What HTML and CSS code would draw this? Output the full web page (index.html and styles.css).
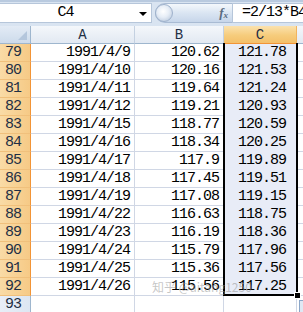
FILE: index.html
```html
<!DOCTYPE html>
<html>
<head>
<meta charset="utf-8">
<link rel="stylesheet" href="styles.css">
</head>
<body>
<div class="fbar">
  <div class="namebox"><span class="ref">C4</span><span class="arrow"></span></div>
  <div class="capsule"><span class="knob"></span><span class="fx">f<sub>x</sub></span></div>
  <div class="formula">=2/13*B4</div>
</div>
<div class="sheet">
  <div class="grid">
    <div class="corner"></div>
    <div class="colh">A</div>
    <div class="colh">B</div>
    <div class="colh sel">C</div>
    <div class="colh last"></div>

    <div class="rowh">79</div><div class="cell">1991/4/9</div><div class="cell">120.62</div><div class="cell c">121.78</div><div class="cell d"></div>
    <div class="rowh">80</div><div class="cell">1991/4/10</div><div class="cell">120.16</div><div class="cell c">121.53</div><div class="cell d"></div>
    <div class="rowh">81</div><div class="cell">1991/4/11</div><div class="cell">119.64</div><div class="cell c">121.24</div><div class="cell d"></div>
    <div class="rowh">82</div><div class="cell">1991/4/12</div><div class="cell">119.21</div><div class="cell c">120.93</div><div class="cell d"></div>
    <div class="rowh">83</div><div class="cell">1991/4/15</div><div class="cell">118.77</div><div class="cell c">120.59</div><div class="cell d"></div>
    <div class="rowh">84</div><div class="cell">1991/4/16</div><div class="cell">118.34</div><div class="cell c">120.25</div><div class="cell d"></div>
    <div class="rowh">85</div><div class="cell">1991/4/17</div><div class="cell">117.9</div><div class="cell c">119.89</div><div class="cell d"></div>
    <div class="rowh">86</div><div class="cell">1991/4/18</div><div class="cell">117.45</div><div class="cell c">119.51</div><div class="cell d"></div>
    <div class="rowh">87</div><div class="cell">1991/4/19</div><div class="cell">117.08</div><div class="cell c">119.15</div><div class="cell d"></div>
    <div class="rowh">88</div><div class="cell">1991/4/22</div><div class="cell">116.63</div><div class="cell c">118.75</div><div class="cell d"></div>
    <div class="rowh">89</div><div class="cell">1991/4/23</div><div class="cell">116.19</div><div class="cell c">118.36</div><div class="cell d"></div>
    <div class="rowh">90</div><div class="cell">1991/4/24</div><div class="cell">115.79</div><div class="cell c">117.96</div><div class="cell d"></div>
    <div class="rowh">91</div><div class="cell">1991/4/25</div><div class="cell">115.36</div><div class="cell c">117.56</div><div class="cell d"></div>
    <div class="rowh">92</div><div class="cell">1991/4/26</div><div class="cell">115.56</div><div class="cell c">117.25</div><div class="cell d"></div>
    <div class="rowh off">93</div><div class="cell"></div><div class="cell"></div><div class="cell"></div><div class="cell d"></div>
  </div>
  <div class="selection"><span class="handle"></span></div>
  <div class="paste"></div>
  <div class="watermark">知乎 @aitang1250</div>
</div>
</body>
</html>
```

FILE: styles.css
```css
* { box-sizing: border-box; }
html, body { margin: 0; padding: 0; }
body {
  width: 303px;
  height: 312px;
  overflow: hidden;
  background: #ffffff;
  font-family: "Liberation Mono", "DejaVu Sans Mono", monospace;
  font-size: 15px;
  color: #000;
}
.fbar {
  height: 26px;
  display: flex;
  align-items: flex-start;
  background: #d9e4f1;
  border-top: 2px solid #b9cadf;
  padding-top: 1px;
}
.namebox {
  width: 152px;
  height: 20px;
  background: #fff;
  border: 1px solid #b6c6da;
  border-left: none;
  position: relative;
  display: flex;
  align-items: center;
  justify-content: center;
  padding-right: 20px;
  letter-spacing: -1px;
}
.ref { line-height: 18px; }
.arrow {
  position: absolute;
  right: 4px;
  top: 8px;
  width: 0;
  height: 0;
  border-left: 4px solid transparent;
  border-right: 4px solid transparent;
  border-top: 4px solid #000;
}
.capsule {
  margin-left: 3px;
  width: 77px;
  height: 20px;
  border-radius: 10px 0 0 10px;
  background: linear-gradient(#f4f8fc, #dae5f2 50%, #c7d6ea);
  border: 1px solid #a9bbd3;
  border-right: none;
  display: flex;
  align-items: center;
  justify-content: space-between;
  padding-right: 4px;
}
.knob {
  width: 18px;
  height: 18px;
  border-radius: 50%;
  background: radial-gradient(circle at 45% 40%, #ffffff 0, #e6edf6 45%, #aebfd6 100%);
  border: 1px solid #9fb2cc;
  margin-left: -1px;
}
.fx {
  font-family: "Liberation Serif", serif;
  font-style: italic;
  font-weight: bold;
  font-size: 13px;
  color: #5a6b80;
  line-height: 1;
}
.fx sub { font-size: 9px; vertical-align: -1px; }
.formula {
  flex: 1;
  height: 20px;
  background: #fff;
  border: 1px solid #b6c6da;
  border-right: none;
  padding-left: 9px;
  line-height: 18px;
  white-space: nowrap;
  overflow: hidden;
  letter-spacing: -1px;
}
.sheet {
  position: relative;
}
.grid {
  display: grid;
  grid-template-columns: 31px 104px 89px 73px 1fr;
  grid-auto-rows: 18px;
}
.grid > div {
  border-right: 1px solid #d0d7e5;
  border-bottom: 1px solid #d0d7e5;
  line-height: 18px;
  white-space: nowrap;
  letter-spacing: -1px;
}
.grid > .corner {
  background: linear-gradient(#e3ebf5, #cddbeb);
  border-right: 1px solid #9eb6ce;
  border-bottom: 1px solid #9eb6ce;
  position: relative;
}
.corner::after {
  content: "";
  position: absolute;
  right: 3px;
  bottom: 3px;
  width: 0;
  height: 0;
  border-left: 9px solid transparent;
  border-bottom: 9px solid #b4c6dc;
}
.grid > .colh {
  background: linear-gradient(#f4f7fb, #e2e9f2);
  border-right: 1px solid #c4d1e1;
  border-bottom: 1px solid #9eb6ce;
  text-align: center;
  color: #1f2f45;
  font-size: 14px;
  letter-spacing: 0;
}
.grid > .colh.sel {
  background: linear-gradient(#fbe2ae, #f6cc7c 55%, #f4c06a);
  border-bottom: 1px solid #f29436;
  border-right: 1px solid #f2b45e;
}
.grid > .colh.last { border-right: none; }
.grid > .rowh {
  background: linear-gradient(to right, #f9dba6, #f6ca86);
  border-right: 1px solid #f29436;
  border-bottom: 1px solid #f0c07c;
  padding-left: 5px;
  color: #1f2f45;
}
.grid > .rowh.off {
  background: linear-gradient(to right, #e8eef7, #dde6f2);
  border-right: 1px solid #9eb6ce;
  border-bottom: 1px solid #c4d1e1;
}
.grid > .cell { text-align: right; padding-right: 4px; }
.grid > .cell.c {
  background: #e8ecf7;
  padding-right: 10px;
  border-bottom-color: #e8ecf7;
}
.grid > .cell.d { border-right: none; }
.selection {
  position: absolute;
  left: 223px;
  top: 17px;
  width: 75px;
  height: 253px;
  border: 2px solid #000;
  border-top: none;
}
.handle {
  position: absolute;
  right: -5px;
  bottom: -5px;
  width: 7px;
  height: 7px;
  background: #000;
  border: 1px solid #fff;
}
.paste {
  position: absolute;
  left: 299px;
  top: 274px;
  width: 6px;
  height: 14px;
  background: #dfe8f4;
  border: 1px solid #8aa6c8;
}
.watermark {
  position: absolute;
  left: 152px;
  top: 252px;
  font-family: "Noto Sans CJK SC", "Liberation Sans", sans-serif;
  font-size: 12px;
  color: rgba(150, 150, 150, 0.55);
  white-space: nowrap;
  letter-spacing: 0;
}
```
